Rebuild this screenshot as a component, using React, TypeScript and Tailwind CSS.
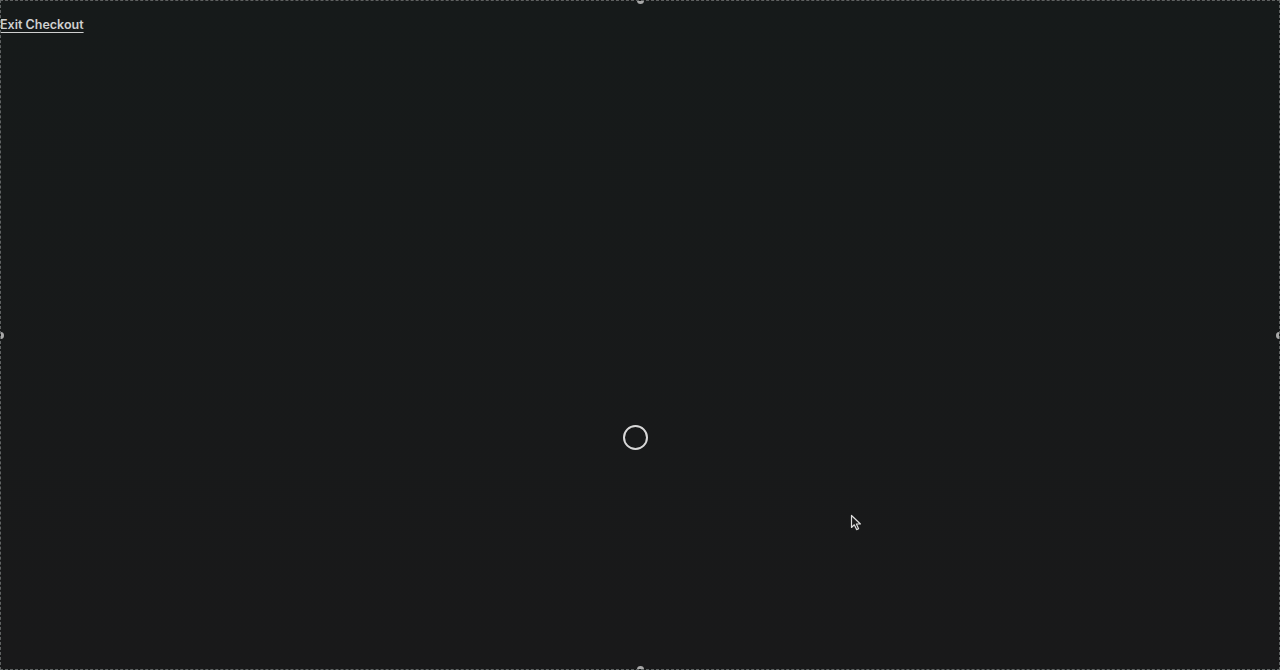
const Handle = ({ className }: { className: string }) => (
  <span className={`absolute w-[7px] h-[7px] rounded-full bg-[#a8a8a8] ${className}`} />
);

const App = () => {
  return (
    <div className="relative w-[1280px] h-[670px] overflow-hidden bg-gradient-to-b from-[#161a1a] to-[#19191a] border border-dashed border-[#5f6262] font-['Inter',sans-serif]">
      {/* selection handles */}
      <Handle className="top-[-4px] left-[636px]" />
      <Handle className="bottom-[-4px] left-[636px]" />
      <Handle className="top-[331px] left-[-4px]" />
      <Handle className="top-[331px] right-[-4px]" />

      <div className="flex flex-col h-full">
        <div className="pt-[10px]">
          <a
            href="#"
            className="text-[12.5px] leading-[18px] font-semibold text-[#cfd0d0] underline underline-offset-[3px] decoration-[1px] ml-[-1px]"
          >
            Exit Checkout
          </a>
        </div>

        <div className="flex justify-center pr-[10px] mt-[390px]">
          <div className="w-[25px] h-[25px] rounded-full border-2 border-[#d8d8d8]" />
        </div>
      </div>

      {/* mouse pointer */}
      <svg
        className="absolute left-[849px] top-[513px]"
        width="13"
        height="17"
        viewBox="0 0 13 17"
      >
        <path
          d="M1.5 1.5 L1.5 13.5 L4.3 10.8 L6.6 15.6 L8.6 14.7 L6.4 10 L10.4 10 Z"
          fill="#1a1a1a"
          stroke="#dcdcdc"
          strokeWidth="1.2"
          strokeLinejoin="round"
        />
      </svg>
    </div>
  );
};

export default App;
